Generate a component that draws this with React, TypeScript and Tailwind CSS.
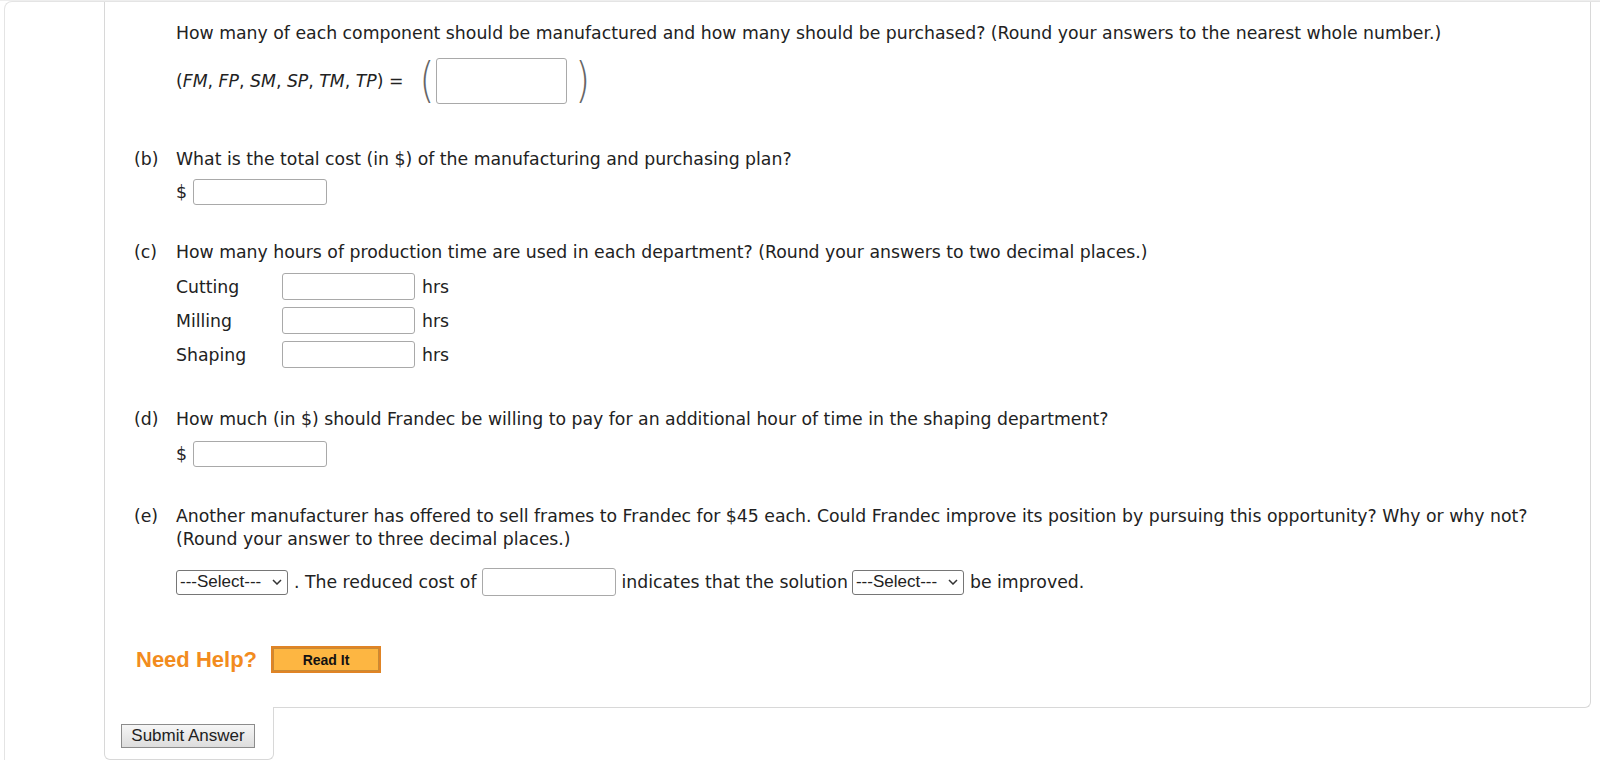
import React from "react";

function Field({ className }: { className: string }) {
  return <div className={"shrink-0 rounded-[3px] border border-[#a9a9a9] bg-white " + className} />;
}

function Select() {
  return (
    <div className="flex h-[25px] w-[112px] shrink-0 items-center justify-between rounded-[3px] border border-[#767676] bg-white pl-[3px] pr-[5px] font-['Liberation_Sans',Arial,sans-serif] text-[17px] leading-[18px] text-[#222]">
      <span>---Select---</span>
      <svg width="10" height="6" viewBox="0 0 10 6">
        <path d="M1 1l4 4 4-4" fill="none" stroke="#333" strokeWidth="1.5" />
      </svg>
    </div>
  );
}

function Paren({ ch }: { ch: string }) {
  return (
    <span className="inline-block scale-y-[1.25] font-['DejaVu_Sans',sans-serif] text-[38px] font-extralight leading-[40px] text-[#666]">
      {ch}
    </span>
  );
}

function Row({ label }: { label: string }) {
  return (
    <div className="flex items-center">
      <span className="w-[106px] shrink-0">{label}</span>
      <Field className="h-[27px] w-[133px]" />
      <span className="ml-[7px]">hrs</span>
    </div>
  );
}

export default function App() {
  return (
    <div className="h-[760px] w-[1600px] overflow-hidden border-t border-[#eeeeee] bg-white font-['DejaVu_Sans',Verdana,sans-serif] text-[17.3px] text-[#222]">
      <div className="ml-[4px] flex h-[759px] rounded-tl-[8px] border-l border-t border-[#e4e4e4]">
        <div className="w-[99px] shrink-0" />
        <div className="flex w-[1487px] flex-col">
          {/* QUESTION BODY */}
          <div className="h-[706px] rounded-br-[6px] border-x border-b border-[#d8d8d8] pl-[29px] pt-[20px] leading-[22px]">
            <div className="pl-[42px]">
              <p className="whitespace-nowrap">
                How many of each component should be manufactured and how many should be purchased? (Round your
                answers to the nearest whole number.)
              </p>
              <div className="mt-[14px] flex h-[46px] items-center">
                <span>
                  (<i>FM</i>, <i>FP</i>, <i>SM</i>, <i>SP</i>, <i>TM</i>, <i>TP</i>) =
                </span>
                <span className="ml-[16px]">
                  <Paren ch="(" />
                </span>
                <Field className="ml-[2px] h-[46px] w-[131px]" />
                <span className="ml-[8px]">
                  <Paren ch=")" />
                </span>
              </div>
            </div>

            {/* (b) */}
            <div className="mt-[44px] flex">
              <span className="w-[42px] shrink-0">(b)</span>
              <div>
                <p>What is the total cost (in $) of the manufacturing and purchasing plan?</p>
                <div className="mt-[9px] flex items-center gap-[6px]">
                  <span>$</span>
                  <Field className="h-[26px] w-[134px]" />
                </div>
              </div>
            </div>

            {/* (c) */}
            <div className="mt-[36px] flex">
              <span className="w-[42px] shrink-0">(c)</span>
              <div>
                <p>How many hours of production time are used in each department? (Round your answers to two decimal places.)</p>
                <div className="mt-[10px] flex flex-col gap-[7px]">
                  <Row label="Cutting" />
                  <Row label="Milling" />
                  <Row label="Shaping" />
                </div>
              </div>
            </div>

            {/* (d) */}
            <div className="mt-[40px] flex">
              <span className="w-[42px] shrink-0">(d)</span>
              <div>
                <p>How much (in $) should Frandec be willing to pay for an additional hour of time in the shaping department?</p>
                <div className="mt-[11px] flex items-center gap-[6px]">
                  <span>$</span>
                  <Field className="h-[26px] w-[134px]" />
                </div>
              </div>
            </div>

            {/* (e) */}
            <div className="mt-[38px] flex leading-[23px]">
              <span className="w-[42px] shrink-0">(e)</span>
              <div>
                <p className="whitespace-nowrap">
                  Another manufacturer has offered to sell frames to Frandec for $45 each. Could Frandec improve its
                  position by pursuing this opportunity? Why or why not?
                  <br />
                  (Round your answer to three decimal places.)
                </p>
                <div className="mt-[17px] flex h-[28px] items-center whitespace-nowrap">
                  <Select />
                  <span className="ml-[6px]">. The reduced cost of</span>
                  <Field className="ml-[5px] h-[28px] w-[134px]" />
                  <span className="ml-[6px]">indicates that the solution</span>
                  <span className="ml-[4px]">
                    <Select />
                  </span>
                  <span className="ml-[6px]">be improved.</span>
                </div>
              </div>
            </div>

            {/* NEED HELP */}
            <div className="ml-[2px] mt-[50px] flex h-[27px] items-center">
              <span className="font-['Liberation_Sans',Arial,sans-serif] text-[22px] font-bold text-[#f28c1e]">Need Help?</span>
              <div className="ml-[14px] flex h-[27px] w-[110px] items-center justify-center border-2 border-[#e08425] bg-[#fdb642] shadow-[inset_0_0_0_1px_#c98a35]">
                <span className="font-['Liberation_Sans',Arial,sans-serif] text-[14px] font-bold text-[#111]">Read It</span>
              </div>
            </div>
          </div>

          {/* SUBMIT TAB */}
          <div className="relative -mt-px h-[53px] w-[170px] rounded-b-[6px] border-x border-b border-[#d8d8d8] bg-white pl-[16px] pt-[17px]">
            <button className="flex h-[24px] w-[134px] items-center justify-center border border-[#8c8c8c] bg-gradient-to-b from-[#f6f6f6] to-[#dddddd] font-['Liberation_Sans',Arial,sans-serif] text-[17px] text-[#222]">
              Submit Answer
            </button>
          </div>
        </div>
      </div>
    </div>
  );
}
